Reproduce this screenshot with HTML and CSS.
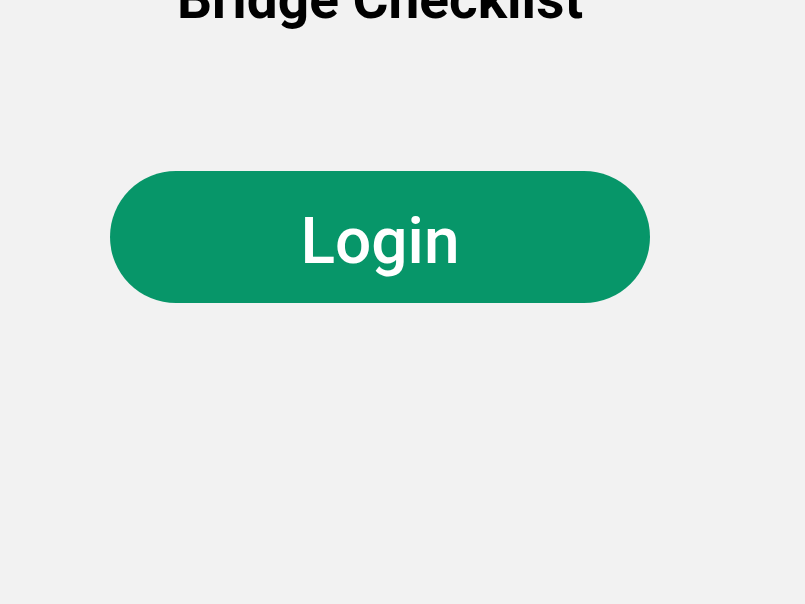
FILE: index.html
```html
<!DOCTYPE html>
<html>
<head>
<meta charset="utf-8">
<link rel="stylesheet" href="styles.css">
</head>
<body>
<main class="page">
  <h1 class="title">Bridge Checklist</h1>
  <button class="login">Login</button>
</main>
</body>
</html>
```
FILE: styles.css
```css
html, body {
  margin: 0;
  padding: 0;
  background: #f2f2f2;
  font-family: Roboto, "Noto Sans", sans-serif;
}
.page {
  width: 540px;
  margin-left: 110px;
  display: flex;
  flex-direction: column;
  align-items: center;
}
.title {
  margin: -28px 0 0 0;
  font-size: 55px;
  line-height: 55px;
  font-weight: 700;
  color: #000;
}
.login {
  margin-top: 144px;
  width: 540px;
  height: 132px;
  border: none;
  border-radius: 66px;
  background: #079669;
  color: #fff;
  font-family: Roboto, sans-serif;
  font-size: 64px;
  font-weight: 500;
  line-height: 64px;
  padding: 10px 0 0 0;
  display: flex;
  align-items: center;
  justify-content: center;
}
```
